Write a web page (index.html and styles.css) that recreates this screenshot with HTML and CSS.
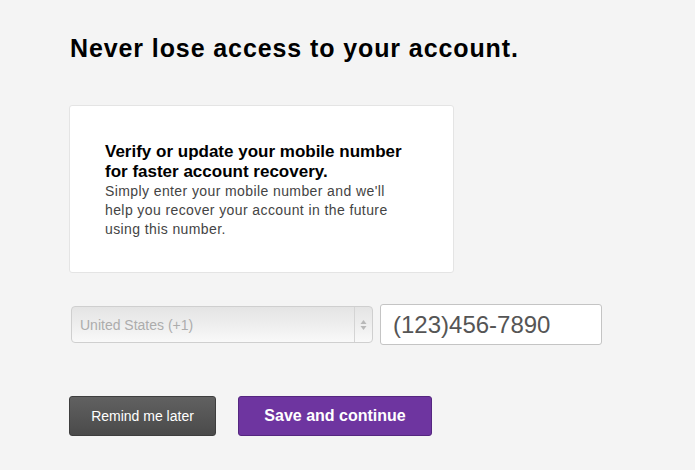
FILE: index.html
```html
<!DOCTYPE html>
<html>
<head>
<meta charset="utf-8">
<link rel="stylesheet" href="styles.css">
</head>
<body>
<main class="page">
  <h1 class="title">Never lose access to your account.</h1>
  <section class="card">
    <p class="card-lead">Verify or update your mobile number for faster account recovery.</p>
    <p class="card-text">Simply enter your mobile number and we'll help you recover your account in the future using this number.</p>
  </section>
  <div class="fields">
    <div class="select">
      <span class="select-label">United States (+1)</span>
      <span class="select-arrows">
        <svg width="7" height="12" viewBox="0 0 7 12"><path d="M3.5 1 L6.5 5 L0.5 5 Z" fill="#b8b8b8"/><path d="M3.5 11 L6.5 7 L0.5 7 Z" fill="#b8b8b8"/></svg>
      </span>
    </div>
    <div class="phone">(123)456-7890</div>
  </div>
  <div class="actions">
    <button class="btn btn-dark">Remind me later</button>
    <button class="btn btn-purple">Save and continue</button>
  </div>
</main>
</body>
</html>
```
FILE: styles.css
```css
html, body {
  margin: 0;
  padding: 0;
  background: #f4f4f4;
  font-family: "Liberation Sans", Arial, sans-serif;
}
.page {
  padding: 33px 0 0 69px;
  width: 560px;
}
.title {
  margin: 0 0 0 1px;
  font-size: 25px;
  letter-spacing: 0.9px;
  font-weight: bold;
  color: #000;
  line-height: 30px;
}
.card {
  margin-top: 42px;
  width: 348px;
  height: 130px;
  padding: 36px 0 0 35px;
  background: #fff;
  border: 1px solid #e4e4e4;
  border-radius: 3px;
  box-sizing: content-box;
}
.card-lead {
  margin: 0;
  font-size: 17px;
  font-weight: bold;
  line-height: 20px;
  color: #000;
  width: 305px;
}
.card-text {
  margin: 0;
  font-size: 14px;
  letter-spacing: 0.4px;
  line-height: 19px;
  color: #444;
  width: 300px;
}
.fields {
  display: flex;
  align-items: center;
  margin-top: 31px;
  gap: 7px;
}
.select {
  margin-left: 2px;
  width: 300px;
  height: 35px;
  display: flex;
  align-items: stretch;
  border: 1px solid #cfcfcf;
  border-radius: 4px;
  background: linear-gradient(#e4e4e4, #f0f0f0 60%, #f9f9f9);
  box-sizing: content-box;
}
.select-label {
  flex: 1;
  display: flex;
  align-items: center;
  padding-left: 8px;
  font-size: 14px;
  color: #acacac;
}
.select-arrows {
  width: 17px;
  border-left: 1px solid #d4d4d4;
  display: flex;
  align-items: center;
  justify-content: center;
}
.phone {
  width: 208px;
  height: 39px;
  padding-left: 12px;
  display: flex;
  align-items: center;
  background: #fff;
  border: 1px solid #c4c4c4;
  border-radius: 3px;
  font-size: 24px;
  color: #555;
}
.actions {
  display: flex;
  gap: 22px;
  margin-top: 51px;
}
.btn {
  height: 40px;
  border-radius: 3px;
  font-family: "Liberation Sans", Arial, sans-serif;
  color: #fff;
  cursor: pointer;
  padding: 0;
}
.btn-dark {
  width: 147px;
  font-size: 14px;
  background: linear-gradient(#616161, #4a4a4a);
  border: 1px solid #3e3e3e;
}
.btn-purple {
  width: 194px;
  font-size: 16px;
  font-weight: bold;
  background: #6e35a0;
  border: 1px solid #552680;
}
```
